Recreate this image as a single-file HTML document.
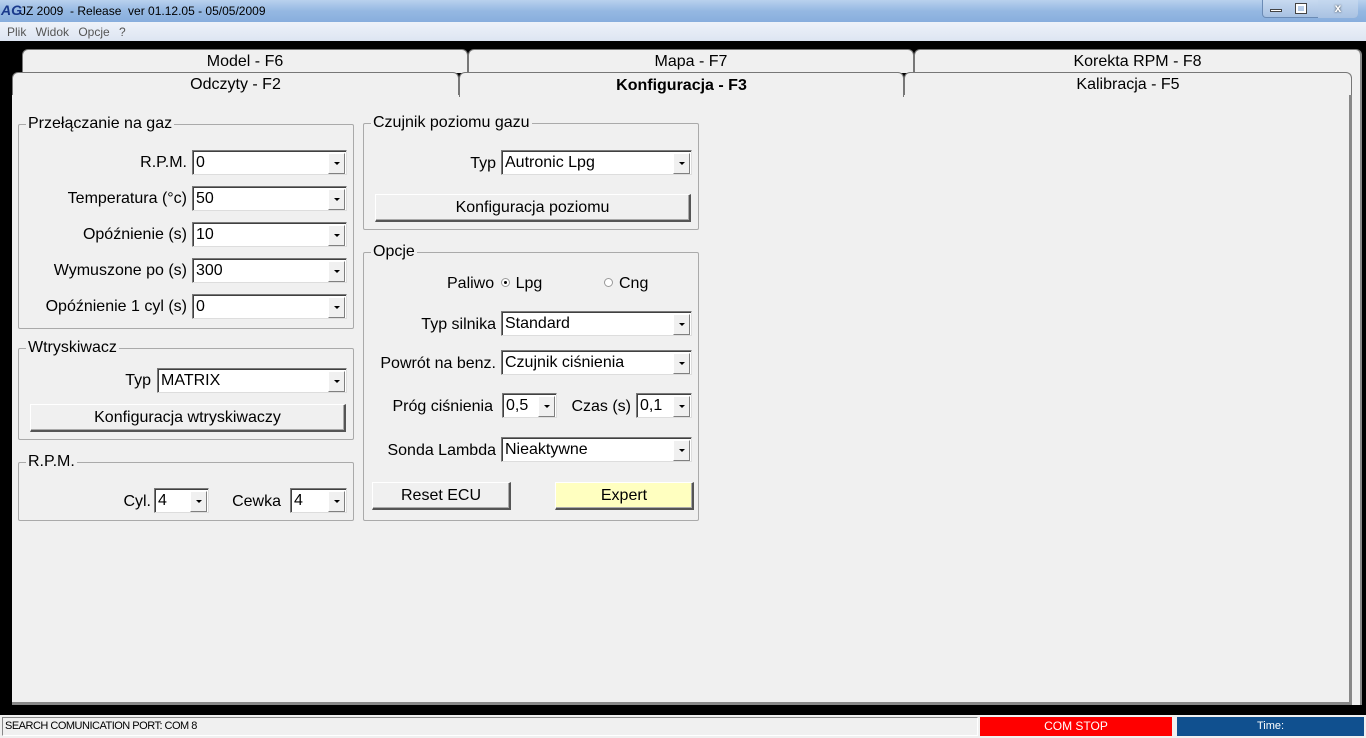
<!DOCTYPE html>
<html><head><meta charset="utf-8"><style>
*{box-sizing:border-box;margin:0;padding:0}
body{width:1366px;height:738px;overflow:hidden;background:#000;font-family:"Liberation Sans",sans-serif;font-size:16px;color:#000;position:relative}
.a{position:absolute}
#title{left:0;top:0;width:1366px;height:22px;background:linear-gradient(#b9d1ee,#95b8e2 50%,#88aedd);font-size:12px;color:#000}
#menu{left:0;top:22px;width:1366px;height:19px;background:linear-gradient(#eef2f9,#dde5f2);font-size:12px;color:#555}
.tab{position:absolute;background:#f0f0f0;border:1px solid #777;border-bottom:none;border-radius:6px 6px 0 0;text-align:center;font-size:16px;line-height:24px}
#panel{left:12px;top:95px;width:1340px;height:610px;background:#f0f0f0;border-right:3px solid #888;border-bottom:3px solid #888}
.grp{position:absolute;border:1px solid #aaa;border-radius:2px}
.grp>span{position:absolute;left:7px;top:-10px;background:#f0f0f0;padding:0 2px;line-height:18px}
.lbl{position:absolute;text-align:right;line-height:26px;white-space:nowrap}
.cb{position:absolute;height:25px;background:#fff;border:1px solid #7a7a7a;border-right-color:#ddd;border-bottom-color:#ddd;box-shadow:inset 1px 1px 0 #404040;padding-left:3px;line-height:24px}
.cb::after{content:"";position:absolute;right:1px;top:2px;width:15px;height:19px;background:#f0f0f0;border:1px solid #fff;border-right-color:#808080;border-bottom-color:#808080}
.cb::before{content:"";position:absolute;right:6px;top:11px;border-left:3px solid transparent;border-right:3px solid transparent;border-top:3px solid #000;z-index:2}
.btn{position:absolute;background:#f0f0f0;border:1px solid #fff;border-right:2px solid #555;border-bottom:2px solid #555;box-shadow:inset -1px -1px 0 #aaa;text-align:center;line-height:26px}
.rad{display:inline-block;width:9px;height:9px;border:1px solid #999;border-radius:50%;vertical-align:1px;margin-right:6px;position:relative;background:#fff}
</style></head><body>
<div id="title" class="a">
 <span class="a" style="left:1px;top:2px;font-weight:bold;color:#1a3a8c;font-size:14px;font-style:italic">AG</span>
 <span class="a" style="left:20px;top:4px">JZ 2009 &nbsp;- Release &nbsp;ver 01.12.05 - 05/05/2009</span>
 <div class="a" style="left:1262px;top:0;width:96px;height:18px;border:1px solid #6b8bb5;border-top:none;border-radius:0 0 4px 4px;background:linear-gradient(#c8daf0,#a7c1e2)"></div>
 <div class="a" style="left:1318px;top:0;width:40px;height:18px;border-radius:0 0 4px 0;background:linear-gradient(#c5d8ef,#a9c2e2);text-align:center;font-weight:bold;color:#fff;text-shadow:0 0 2px #333;line-height:17px">x</div>
 <div class="a" style="left:1270px;top:9px;width:12px;height:3px;background:#fff;border:1px solid #444"></div>
 <div class="a" style="left:1296px;top:4px;width:10px;height:9px;border:2px solid #fff;outline:1px solid #444"></div>
</div>
<div id="menu" class="a"><span class="a" style="left:7px;top:3px;word-spacing:6px">Plik Widok Opcje ?</span></div>

<div class="tab" style="left:22px;top:49px;width:446px;height:24px">Model - F6</div>
<div class="tab" style="left:468px;top:49px;width:446px;height:24px">Mapa - F7</div>
<div class="tab" style="left:914px;top:49px;width:448px;height:656px;border-right:2px solid #888">Korekta RPM - F8</div>
<div class="tab" style="left:12px;top:72px;width:447px;height:24px">Odczyty - F2</div>
<div class="tab" style="left:904px;top:72px;width:448px;height:24px">Kalibracja - F5</div>
<div id="panel" class="a"></div>
<div class="tab" style="left:459px;top:72px;width:445px;height:25px;border-bottom:none;font-weight:bold;line-height:25px;z-index:2;background:#f0f0f0">Konfiguracja - F3</div>

<div class="grp" style="left:18px;top:124px;width:336px;height:205px"><span>Przełączanie na gaz</span></div>
<div class="lbl" style="right:1179px;top:150px">R.P.M.</div><div class="cb" style="left:192px;top:150px;width:155px">0</div>
<div class="lbl" style="right:1179px;top:186px">Temperatura (°c)</div><div class="cb" style="left:192px;top:186px;width:155px">50</div>
<div class="lbl" style="right:1179px;top:222px">Opóźnienie (s)</div><div class="cb" style="left:192px;top:222px;width:155px">10</div>
<div class="lbl" style="right:1179px;top:258px">Wymuszone po (s)</div><div class="cb" style="left:192px;top:258px;width:155px">300</div>
<div class="lbl" style="right:1179px;top:294px">Opóźnienie 1 cyl (s)</div><div class="cb" style="left:192px;top:294px;width:155px">0</div>

<div class="grp" style="left:18px;top:348px;width:336px;height:92px"><span>Wtryskiwacz</span></div>
<div class="lbl" style="right:1215px;top:368px">Typ</div><div class="cb" style="left:157px;top:368px;width:190px">MATRIX</div>
<div class="btn" style="left:30px;top:404px;width:316px;height:28px">Konfiguracja wtryskiwaczy</div>

<div class="grp" style="left:18px;top:462px;width:336px;height:59px"><span>R.P.M.</span></div>
<div class="lbl" style="right:1215px;top:489px">Cyl.</div><div class="cb" style="left:154px;top:488px;width:55px">4</div>
<div class="lbl" style="right:1085px;top:489px">Cewka</div><div class="cb" style="left:290px;top:488px;width:57px">4</div>

<div class="grp" style="left:363px;top:123px;width:336px;height:107px"><span>Czujnik poziomu gazu</span></div>
<div class="lbl" style="right:870px;top:151px">Typ</div><div class="cb" style="left:501px;top:150px;width:191px">Autronic Lpg</div>
<div class="btn" style="left:375px;top:194px;width:316px;height:28px">Konfiguracja poziomu</div>

<div class="grp" style="left:363px;top:252px;width:336px;height:269px"><span>Opcje</span></div>
<div class="a" style="left:447px;top:274px;line-height:20px">Paliwo <span class="rad" style="margin-left:2px"><span class="a" style="left:2px;top:2px;width:3px;height:3px;background:#000;border-radius:50%"></span></span>Lpg</div>
<div class="a" style="left:604px;top:274px;line-height:20px"><span class="rad"></span>Cng</div>
<div class="lbl" style="right:870px;top:312px">Typ silnika</div><div class="cb" style="left:501px;top:311px;width:191px">Standard</div>
<div class="lbl" style="right:870px;top:351px">Powrót na benz.</div><div class="cb" style="left:501px;top:350px;width:191px">Czujnik ciśnienia</div>
<div class="lbl" style="right:873px;top:394px">Próg ciśnienia</div><div class="cb" style="left:502px;top:393px;width:55px">0,5</div>
<div class="lbl" style="right:735px;top:394px">Czas (s)</div><div class="cb" style="left:636px;top:393px;width:56px">0,1</div>
<div class="lbl" style="right:870px;top:438px">Sonda Lambda</div><div class="cb" style="left:501px;top:437px;width:191px">Nieaktywne</div>
<div class="btn" style="left:372px;top:482px;width:139px;height:28px">Reset ECU</div>
<div class="btn" style="left:555px;top:482px;width:139px;height:28px;background:#ffffc0">Expert</div>

<div class="a" style="left:0;top:715px;width:1366px;height:23px;background:#f0f0f0"></div>
<div class="a" style="left:2px;top:717px;width:976px;height:19px;border:1px solid #888;border-right-color:#fff;border-bottom-color:#fff;font-size:11px;line-height:17px;padding-left:2px;letter-spacing:-0.5px">SEARCH COMUNICATION PORT: COM 8</div>
<div class="a" style="left:980px;top:717px;width:192px;height:19px;background:#f00;color:#fff;font-size:12px;text-align:center;line-height:19px">COM STOP</div>
<div class="a" style="left:1177px;top:717px;width:187px;height:19px;background:#10508f;color:#fff;font-size:11px;text-align:center;line-height:19px">Time:</div>
</body></html>
